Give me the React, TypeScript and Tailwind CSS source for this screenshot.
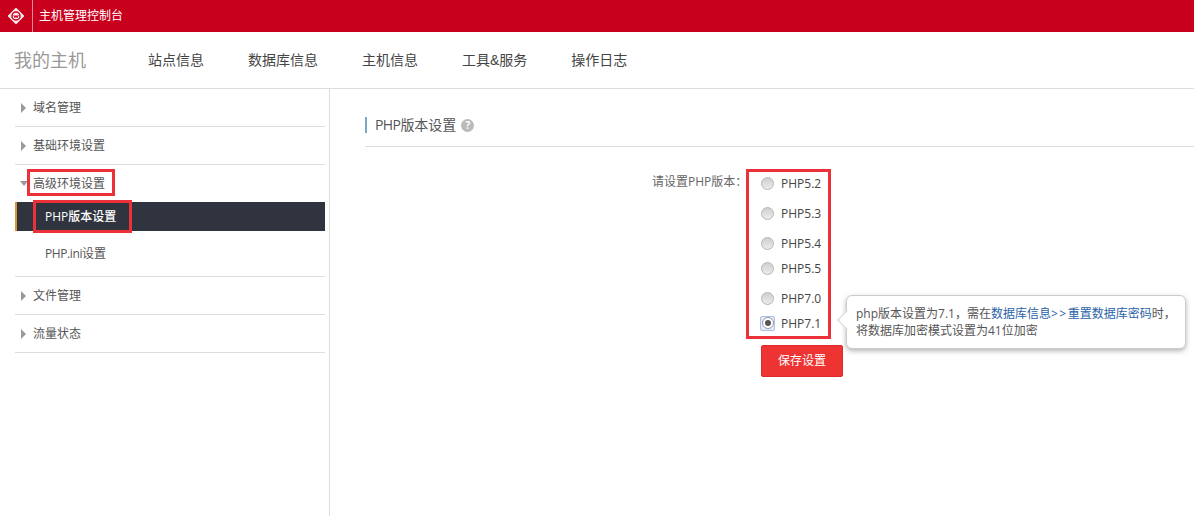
const navItems = ["站点信息", "数据库信息", "主机信息", "工具&服务", "操作日志"];

const versions = [
  { label: "PHP5.2", gap: "mb-[10px]" },
  { label: "PHP5.3", gap: "mb-[10px]" },
  { label: "PHP5.4", gap: "mb-[5px]" },
  { label: "PHP5.5", gap: "mb-[10px]" },
  { label: "PHP7.0", gap: "mb-[5px]" },
  { label: "PHP7.1", gap: "", checked: true },
];

function Logo() {
  return (
    <svg width="18" height="18" viewBox="0 0 18 18">
      <path d="M9 1.5L16.5 9 9 16.5 1.5 9z" fill="#f8e9ea" stroke="#f8e9ea" strokeWidth="1.2" strokeLinejoin="round" />
      <circle cx="9" cy="9" r="4" fill="none" stroke="#c9001d" strokeWidth="1.5" />
      <path d="M6.8 8.2l1.2 2.4 1-2.2 1 2.2 1.3-2.6" fill="none" stroke="#c9001d" strokeWidth="1" />
    </svg>
  );
}

function ArrowRight() {
  return <span className="h-0 w-0 border-y-[5px] border-l-[5px] border-y-transparent border-l-[#999]" />;
}

function SideRow({ label }: { label: string }) {
  return (
    <div className="flex h-[38px] items-center gap-[7px] border-b border-[#ddd] pl-[6px] text-xs text-[#555]">
      <ArrowRight />
      <span>{label}</span>
    </div>
  );
}

function Radio({ checked }: { checked?: boolean }) {
  if (checked) {
    return (
      <span className="flex h-[15px] w-[15px] items-center justify-center rounded-[2px] border border-[#a9c0e8] bg-[#e4ecfa]">
        <span className="flex h-[12px] w-[12px] items-center justify-center rounded-full border border-[#999] bg-white">
          <span className="h-[6px] w-[6px] rounded-full bg-[#555]" />
        </span>
      </span>
    );
  }
  return <span className="h-[13px] w-[13px] rounded-full border border-[#b5b5b5] bg-gradient-to-b from-[#cfcfcf] to-[#ececec]" />;
}

export default function App() {
  return (
    <div className="flex h-[516px] w-[1194px] flex-col overflow-hidden bg-white font-['Open_Sans','Noto_Sans_CJK_SC',sans-serif] text-[#444]">
      <header className="flex h-8 shrink-0 items-center bg-[#c9001d]">
        <div className="flex h-8 w-[33px] items-center justify-center border-r border-[#e58a97]">
          <Logo />
        </div>
        <span className="pl-[6px] text-xs text-white">主机管理控制台</span>
      </header>

      <nav className="flex h-[57px] shrink-0 items-center border-b border-[#ddd] pl-[14px]">
        <span className="w-[134px] text-lg text-[#999]">我的主机</span>
        <div className="flex gap-11 font-['Liberation_Sans','Noto_Sans_CJK_SC',sans-serif] text-sm text-[#444]">
          {navItems.map((item) => (
            <span key={item}>{item}</span>
          ))}
        </div>
      </nav>

      <div className="flex min-h-0 flex-1">
        <aside className="w-[330px] shrink-0 border-r border-[#ddd] pl-[15px] pr-[4px]">
          <SideRow label="域名管理" />
          <SideRow label="基础环境设置" />
          <div className="border-b border-[#ddd] text-xs">
            <div className="flex h-[37px] items-center gap-[5px] pl-[5px] text-[#555]">
              <span className="h-0 w-0 border-x-[4px] border-t-[5px] border-x-transparent border-t-[#999]" />
              <span className="relative">
                高级环境设置
                <span className="absolute -left-[6px] -right-[10px] -top-[7px] -bottom-[4px] border-[3px] border-[#ec3238]" />
              </span>
            </div>
            <div className="flex h-[29px] items-center border-l-2 border-[#d8962c] bg-[#30343f] pl-[28px] font-medium text-white">
              <span className="relative">
                PHP版本设置
                <span className="absolute -left-[12px] -right-[16px] -top-[9px] -bottom-[8px] border-[3px] border-[#ec3238]" />
              </span>
            </div>
            <div className="flex h-[45px] items-center pl-[30px] text-[#555]">
              <span className="tracking-[-0.4px]">PHP.ini</span>设置
            </div>
          </div>
          <SideRow label="文件管理" />
          <SideRow label="流量状态" />
        </aside>

        <main className="min-w-0 flex-1 pl-[35px]">
          <div className="mt-[28px] flex h-[30px] items-start border-b border-[#ddd]">
            <div className="flex h-4 items-center gap-[6px] border-l-2 border-[#7ba6c4] pl-[8px] text-sm text-[#555]">
              <span>
                <span className="tracking-[-0.6px]">PHP</span>版本设置
              </span>
              <span className="-ml-[1px] flex h-[13px] w-[13px] items-center justify-center rounded-full bg-[#bbb] text-[10px] font-bold text-white">?</span>
            </div>
          </div>

          <div className="ml-[287px] mt-[22px] flex items-start">
            <label className="w-[94px] whitespace-nowrap pt-[5px] text-xs text-[#666]">请设置PHP版本：</label>
            <div className="relative">
              <div className="h-[170px] w-[85px] border-[3px] border-[#ec3238] pl-[12px] pt-[1px]">
                {versions.map((v) => (
                  <div key={v.label} className={`flex h-[20px] items-center ${v.gap} ${v.checked ? "gap-[6px] -ml-[1px]" : "gap-[7px]"}`}>
                    <Radio checked={v.checked} />
                    <span className="pt-px text-xs text-[#444]">{v.label}</span>
                  </div>
                ))}
              </div>
              <div className="absolute left-[100px] top-[126px] h-[54px] w-[340px] rounded-md border border-[#ccc] bg-white px-[9px] pt-[9px] text-xs leading-[17px] text-[#555] shadow-[0_2px_5px_rgba(0,0,0,0.3)]">
                <span className="absolute -left-[7px] top-[17px] h-[14px] w-[14px] rotate-45 border-b border-l border-[#d5d5d5] bg-white" />
                <p className="relative whitespace-nowrap">
                  php版本设置为7.1，需在<span className="text-[#2a62a8]">数据库信息<span className="tracking-[1.5px]">&gt;&gt;</span>重置数据库密码</span>时，
                </p>
                <p className="relative whitespace-nowrap">将数据库加密模式设置为41位加密</p>
              </div>
              <button className="ml-[15px] mt-[6px] block h-8 w-[82px] rounded-[2px] border border-[#dd2b2b] bg-[#ee3333] text-xs text-white">
                保存设置
              </button>
            </div>
          </div>
        </main>
      </div>
    </div>
  );
}
